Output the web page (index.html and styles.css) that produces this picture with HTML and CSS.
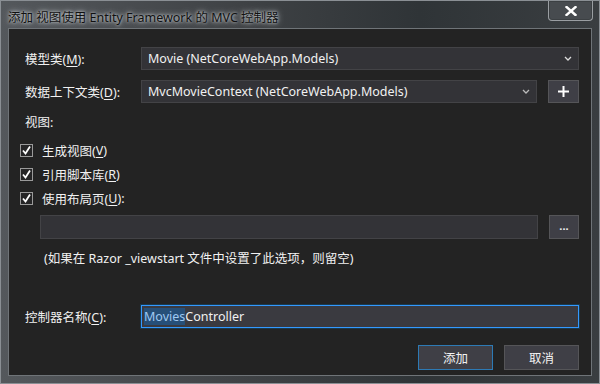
FILE: index.html
```html
<!DOCTYPE html>
<html lang="zh-CN">
<head>
    <meta charset="UTF-8">
    <title>添加 视图使用 Entity Framework 的 MVC 控制器</title>
    <link rel="stylesheet" href="styles.css">
</head>
<body>
    <div class="window">
        <div class="titlebar">
            <span class="title">添加 视图使用 Entity Framework 的 MVC 控制器</span>
            <span class="close-btn">
                <svg width="12" height="10" viewBox="0 0 12 10"><path d="M1.5 1 L10.5 9 M10.5 1 L1.5 9" stroke="#fff" stroke-width="2.4" stroke-linecap="square"/></svg>
            </span>
        </div>
        <div class="client">
            <div class="row first">
                <label class="label">模型类(<u>M</u>):</label>
                <div class="combo wide">
                    <span>Movie (NetCoreWebApp.Models)</span>
                    <svg class="arrow" width="8" height="5" viewBox="0 0 8 5"><path d="M1 1 L4 4 L7 1" stroke="#ddd" stroke-width="1.3" fill="none"/></svg>
                </div>
            </div>
            <div class="row second">
                <label class="label">数据上下文类(<u>D</u>):</label>
                <div class="combo">
                    <span>MvcMovieContext (NetCoreWebApp.Models)</span>
                    <svg class="arrow" width="8" height="5" viewBox="0 0 8 5"><path d="M1 1 L4 4 L7 1" stroke="#bbb" stroke-width="1.3" fill="none"/></svg>
                </div>
                <div class="btn square">
                    <svg width="11" height="11" viewBox="0 0 11 11"><path d="M5.5 0 V11 M0 5.5 H11" stroke="#fff" stroke-width="2"/></svg>
                </div>
            </div>

            <div class="section">视图:</div>
            <div class="checks">
                <div class="check"><span class="box"><svg width="11" height="11" viewBox="0 0 11 11"><path d="M2 5.5 L4.5 8.5 L9 1.5" stroke="#fff" stroke-width="1.8" fill="none"/></svg></span>生成视图(<u>V</u>)</div>
                <div class="check"><span class="box"><svg width="11" height="11" viewBox="0 0 11 11"><path d="M2 5.5 L4.5 8.5 L9 1.5" stroke="#fff" stroke-width="1.8" fill="none"/></svg></span>引用脚本库(<u>R</u>)</div>
                <div class="check"><span class="box"><svg width="11" height="11" viewBox="0 0 11 11"><path d="M2 5.5 L4.5 8.5 L9 1.5" stroke="#fff" stroke-width="1.8" fill="none"/></svg></span>使用布局页(<u>U</u>):</div>
            </div>
            <div class="layout-row">
                <div class="textbox layout"></div>
                <div class="btn square dots">...</div>
            </div>
            <div class="note">(如果在 Razor _viewstart 文件中设置了此选项，则留空)</div>

            <div class="row controller">
                <label class="label">控制器名称(<u>C</u>):</label>
                <div class="textbox focused"><span class="sel">Movies</span>Controller</div>
            </div>
            <div class="buttons">
                <div class="btn action default">添加</div>
                <div class="btn action">取消</div>
            </div>
        </div>
    </div>
</body>
</html>
```

FILE: styles.css
```css
body {
    margin: 0;
    background: #2b2e31;
    font-family: 'Noto Sans', 'Noto Sans CJK SC', sans-serif;
    font-size: 12.5px;
}
.window {
    width: 600px;
    height: 384px;
    box-sizing: border-box;
    background: linear-gradient(90deg, #54585c 0%, #3f4245 40%, #2f3437 70%, #3a3e41 100%);
    border: 1px solid #8a8f94;
    display: flex;
    flex-direction: column;
}
.titlebar {
    height: 27px;
    display: flex;
    justify-content: space-between;
    align-items: flex-start;
    padding-left: 7px;
}
.title {
    margin-top: 6px;
    font-size: 12.5px;
    color: #111;
    text-shadow: 0 0 6px rgba(220, 225, 230, 0.9), 0 0 3px rgba(220, 225, 230, 0.9);
}
.close-btn {
    width: 43px;
    height: 19px;
    margin-right: 6px;
    border: 1px solid #9a9ea2;
    border-top: none;
    border-radius: 0 0 4px 4px;
    box-shadow: inset 0 0 0 1px #3c4043;
    background: #474b4f;
    display: flex;
    align-items: center;
    justify-content: center;
}
.client {
    flex: 1;
    margin: 0 7px 7px 7px;
    background: #232323;
    border: 1px solid #6f7478;
    color: #f1f1f1;
    padding: 18px 12px 0 16px;
    display: flex;
    flex-direction: column;
}
.row {
    display: flex;
    align-items: center;
    height: 23px;
}
.row.second {
    margin-top: 10px;
}
.label {
    width: 116px;
}
u {
    text-decoration-thickness: 1px;
    text-underline-offset: 2px;
}
.combo, .textbox {
    flex: 1;
    height: 23px;
    box-sizing: border-box;
    background: #333337;
    border: 1px solid #434346;
    display: flex;
    align-items: center;
    padding-left: 6px;
    white-space: nowrap;
}
.combo span {
    flex: 1;
}
.arrow {
    margin-right: 6px;
}
.btn {
    background: #3f3f46;
    border: 1px solid #555558;
    box-sizing: border-box;
    display: flex;
    align-items: center;
    justify-content: center;
    color: #f1f1f1;
}
.square {
    width: 31px;
    height: 23px;
    margin-left: 11px;
}
.section {
    margin-top: 11px;
    height: 18px;
    line-height: 18px;
}
.checks {
    margin-top: 6px;
    margin-left: -5px;
}
.check {
    display: flex;
    align-items: center;
    height: 24px;
}
.box {
    width: 11px;
    height: 11px;
    border: 1px solid #9a9a9a;
    background: #252526;
    margin-right: 9px;
    display: flex;
}
.layout-row {
    display: flex;
    margin-top: 5px;
    margin-left: 15px;
}
.layout-row .textbox {
    height: 24px;
}
.dots {
    height: 24px;
    width: 30px;
    font-size: 11px;
    line-height: 1;
    padding-bottom: 3px;
    font-weight: bold;
}
.note {
    margin-top: 11px;
    margin-left: 19px;
    height: 18px;
    line-height: 18px;
}
.controller {
    margin-top: 37px;
}
.textbox.focused {
    border-color: #3399ff;
    background: #3a3a40;
    padding-left: 2px;
    box-shadow: 0 0 0 1px rgba(0, 122, 204, 0.25);
}
.sel {
    background: #264f78;
    color: #9fc9f2;
}
.buttons {
    display: flex;
    justify-content: flex-end;
    gap: 11px;
    margin-top: 17px;
}
.action {
    width: 75px;
    height: 25px;
}
.action.default {
    border-color: #2d7ab5;
}
```
